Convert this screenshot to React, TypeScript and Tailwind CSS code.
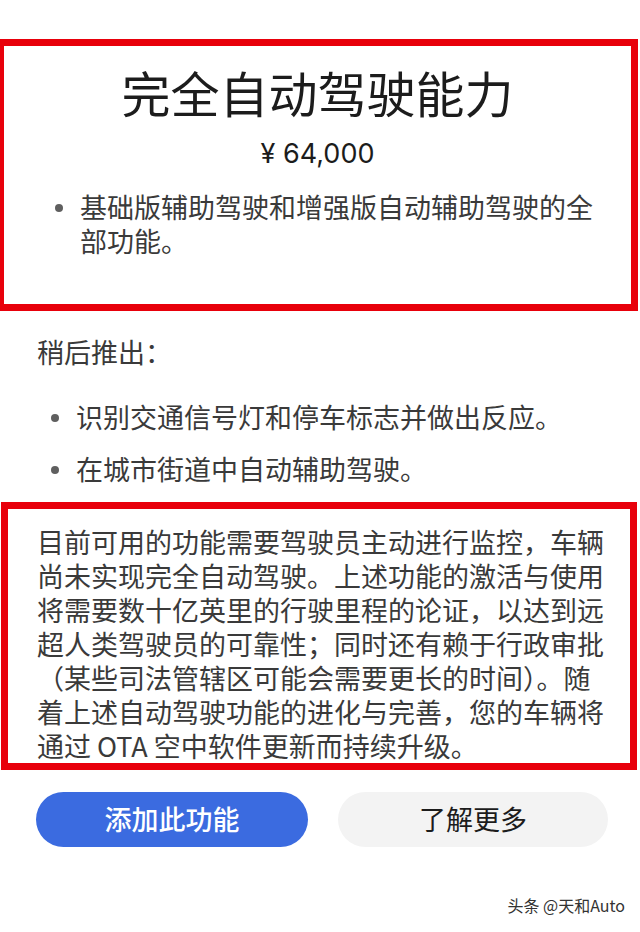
import React from "react";

const font = { fontFamily: '"Noto Sans CJK SC", "Noto Sans", sans-serif' };

function Dot() {
  return <span className="mt-[14px] h-[8px] w-[8px] shrink-0 rounded-full bg-[#5f5f5f]" />;
}

export default function App() {
  const para = [
    "目前可用的功能需要驾驶员主动进行监控，车辆",
    "尚未实现完全自动驾驶。上述功能的激活与使用",
    "将需要数十亿英里的行驶里程的论证，以达到远",
    "超人类驾驶员的可靠性；同时还有赖于行政审批",
    "（某些司法管辖区可能会需要更长的时间）。随",
    "着上述自动驾驶功能的进化与完善，您的车辆将",
    "通过 OTA 空中软件更新而持续升级。",
  ];
  return (
    <div className="w-[640px] h-[932px] bg-white overflow-hidden text-[#3a3a3a]" style={font}>
      <div className="pt-[39px]">
        <div className="w-[641px] -ml-[3px] border-[7px] border-[#e8000b] pt-[17px] pb-[46px]">
          <div className="text-center text-[49px] leading-[58px] text-[#1c1c1c]">完全自动驾驶能力</div>
          <div
            className="mt-[16px] text-center text-[27px] leading-[34px] text-[#1c1c1c]"
            style={{ fontFamily: 'Inter, "Noto Sans CJK SC", sans-serif' }}
          >
            ¥ 64,000
          </div>
          <div className="mt-[19px] flex gap-[17px] pl-[51px] text-[27px] leading-[34px]">
            <Dot />
            <div>
              基础版辅助驾驶和增强版自动辅助驾驶的全
              <br />
              部功能。
            </div>
          </div>
        </div>

        <div className="mt-[24px] pl-[37px] text-[27px] leading-[34px]">稍后推出：</div>
        <div className="mt-[31px] flex gap-[17px] pl-[51px] text-[27px] leading-[34px]">
          <Dot />
          <div>识别交通信号灯和停车标志并做出反应。</div>
        </div>
        <div className="mt-[18px] flex gap-[17px] pl-[51px] text-[27px] leading-[34px]">
          <Dot />
          <div>在城市街道中自动辅助驾驶。</div>
        </div>

        <div className="mt-[16px] ml-[1px] w-[636px] border-[7px] border-[#e8000b] pt-[16px] pb-[0px] pl-[29px] text-[27px] leading-[34px]">
          {para.map((l, i) => (
            <div key={i} className="whitespace-nowrap">
              {l}
            </div>
          ))}
        </div>

        <div className="mt-[22px] flex gap-[30px] pl-[36px]">
          <div className="flex h-[55px] w-[272px] items-center justify-center rounded-full bg-[#3b6be0] text-[27px] font-medium text-white">
            添加此功能
          </div>
          <div className="flex h-[55px] w-[270px] items-center justify-center rounded-full bg-[#f3f3f3] text-[27px] text-[#1c1c1c]">
            了解更多
          </div>
        </div>

        <div className="mt-[48px] flex justify-end pr-[15px] text-[16px] leading-[20px] text-[#333]">
          头条 @天和Auto
        </div>
      </div>
    </div>
  );
}
